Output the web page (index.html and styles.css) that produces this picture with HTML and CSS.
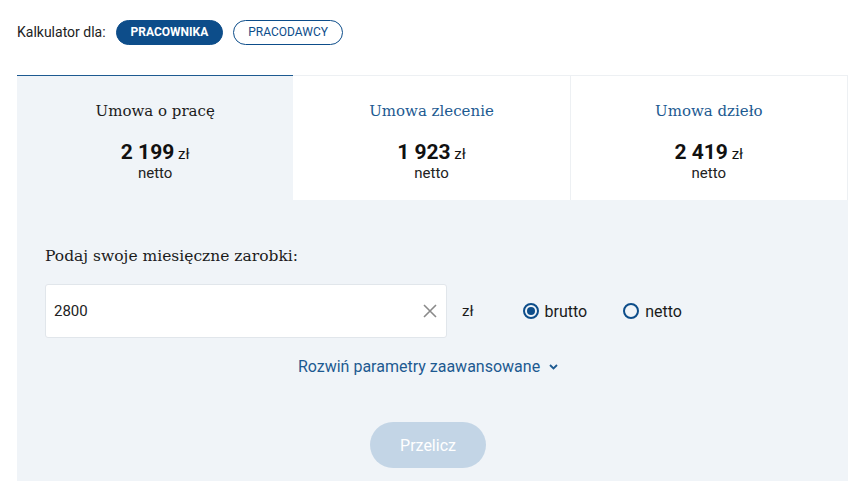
FILE: index.html
```html
<!DOCTYPE html>
<html lang="pl">
	<head>
		<meta charset="UTF-8">
		<title>Kalkulator wynagrodzeń</title>
		<link rel="stylesheet" href="styles.css">
	</head>
	<body>
		<div class="calc">
			<div class="who">
				<span class="who-label">Kalkulator dla:</span>
				<a href="javascript:;" class="pill active">PRACOWNIKA</a>
				<a href="javascript:;" class="pill">PRACODAWCY</a>
			</div>

			<ul class="tabs">
				<li class="active">
					<div class="tab-title">Umowa o pracę</div>
					<div class="tab-sum"><b>2 199</b> zł</div>
					<div class="tab-net">netto</div>
				</li>
				<li>
					<div class="tab-title">Umowa zlecenie</div>
					<div class="tab-sum"><b>1 923</b> zł</div>
					<div class="tab-net">netto</div>
				</li>
				<li>
					<div class="tab-title">Umowa dzieło</div>
					<div class="tab-sum"><b>2 419</b> zł</div>
					<div class="tab-net">netto</div>
				</li>
			</ul>

			<div class="panel">
				<div class="panel-label">Podaj swoje miesięczne zarobki:</div>
				<div class="row">
					<div class="field">
						<input type="text" value="2800">
						<span class="clear">
							<svg width="14" height="14" viewBox="0 0 14 14"><path d="M1 1L13 13M13 1L1 13" stroke="#8a8a8a" stroke-width="1.6" fill="none"/></svg>
						</span>
					</div>
					<span class="unit">zł</span>
					<label class="radio checked"><span class="dot"></span>brutto</label>
					<label class="radio"><span class="dot"></span>netto</label>
				</div>
				<div class="more">
					<a href="javascript:;">Rozwiń parametry zaawansowane
						<svg width="9" height="6" viewBox="0 0 9 6"><path d="M1 1L4.5 4.5L8 1" stroke="#1d5a91" stroke-width="1.8" fill="none"/></svg>
					</a>
				</div>
				<div class="submit">
					<button type="button">Przelicz</button>
				</div>
			</div>
		</div>
	</body>
</html>
```

FILE: styles.css
```css
body{
	margin: 0;
	padding: 0;
	font-family: Roboto, "Liberation Sans", sans-serif;
	color: #1b1b1b;
	background: #fff;
}
ul,li{
	margin: 0;
	padding: 0;
	list-style: none;
}
a{
	text-decoration: none;
}
.calc{
	width: 831px;
	margin: 0 0 0 17px;
}
.who{
	display: flex;
	align-items: center;
	height: 64px;
	font-size: 14px;
}
.who-label{
	color: #222;
	margin-right: 10px;
}
.pill{
	display: inline-block;
	box-sizing: border-box;
	height: 25px;
	line-height: 23px;
	padding: 0 14px;
	border: 1px solid #0d4d8a;
	border-radius: 13px;
	color: #0d4d8a;
	font-size: 12px;
	margin-right: 10px;
}
.pill.active{
	background: #0d4d8a;
	color: #fff;
	font-weight: 700;
}
.tabs{
	display: flex;
	margin-top: 11px;
}
.tabs li{
	flex: 1;
	box-sizing: border-box;
	height: 125px;
	padding-top: 26px;
	text-align: center;
	background: #fff;
	border-top: 1px solid #edf0f3;
	border-right: 1px solid #edf0f3;
}
.tabs li.active{
	background: #f0f4f8;
	border-top-color: #1d5a91;
	border-right: 0;
}
.tab-title{
	font-family: "DejaVu Serif", "Liberation Serif", serif;
	font-size: 15px;
	color: #1d5a91;
	height: 22px;
}
.tabs li.active .tab-title{
	color: #1b1b1b;
}
.tab-sum{
	margin-top: 16px;
	font-size: 15px;
	color: #111;
}
.tab-sum b{
	font-size: 21px;
}
.tab-net{
	font-size: 15px;
	color: #222;
	margin-top: 0;
}
.panel{
	background: #f0f4f8;
	padding: 47px 37px 40px 28px;
}
.panel-label{
	font-family: "DejaVu Serif", "Liberation Serif", serif;
	font-size: 15.5px;
	color: #1b1b1b;
	margin-bottom: 19px;
}
.row{
	display: flex;
	align-items: center;
}
.field{
	position: relative;
	width: 402px;
	height: 54px;
}
.field input{
	box-sizing: border-box;
	width: 100%;
	height: 54px;
	border: 1px solid #e1e6eb;
	border-radius: 3px;
	background: #fff;
	padding: 0 40px 0 8px;
	font-family: Roboto, "Liberation Sans", sans-serif;
	font-size: 15px;
	color: #222;
	outline: none;
}
.clear{
	position: absolute;
	right: 10px;
	top: 20px;
	line-height: 0;
}
.unit{
	font-size: 15px;
	margin: 0 49px 0 15px;
}
.radio{
	display: flex;
	align-items: center;
	font-size: 16px;
	color: #1b1b1b;
	margin-right: 36px;
}
.dot{
	box-sizing: border-box;
	width: 16px;
	height: 16px;
	border: 2px solid #0d4d8a;
	border-radius: 50%;
	margin-right: 6px;
	display: flex;
	align-items: center;
	justify-content: center;
}
.radio.checked .dot:after{
	content: '';
	width: 8px;
	height: 8px;
	border-radius: 50%;
	background: #0d4d8a;
}
.more{
	text-align: center;
	margin-top: 19px;
	font-size: 16px;
}
.more a{
	color: #1d5a91;
}
.more svg{
	margin-left: 5px;
	vertical-align: 2px;
}
.submit{
	text-align: center;
	margin-top: 46px;
}
.submit button{
	width: 116px;
	height: 46px;
	border: 0;
	border-radius: 23px;
	background: #c3d5e6;
	color: #fff;
	font-family: Roboto, "Liberation Sans", sans-serif;
	font-size: 16px;
}
```
